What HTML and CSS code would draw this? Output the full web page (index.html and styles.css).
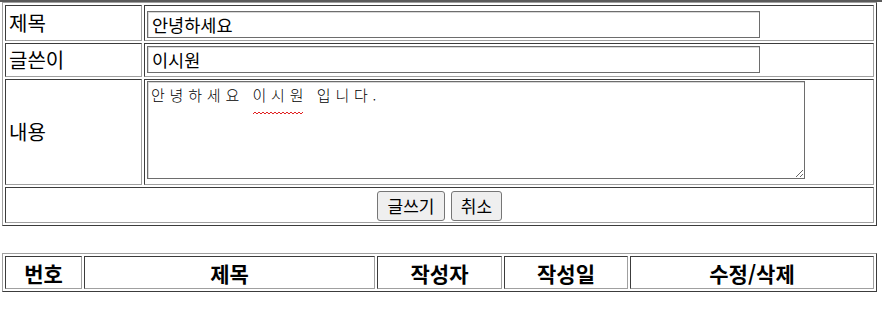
FILE: index.html
```html
<!DOCTYPE html>
<html lang="ko">
<head>
<meta charset="utf-8">
<title>글쓰기</title>
<link rel="stylesheet" href="styles.css">
</head>
<body>
<div class="topbar"></div>
<form class="write-form">
  <table class="grid write-table">
    <tr class="row-title">
      <td class="label">제목</td>
      <td class="field"><input class="text-input" type="text" value="안녕하세요"></td>
    </tr>
    <tr class="row-writer">
      <td class="label">글쓴이</td>
      <td class="field"><input class="text-input" type="text" value="이시원"></td>
    </tr>
    <tr class="row-content">
      <td class="label">내용</td>
      <td class="field field-area">
        <span class="area-wrap">
          <textarea class="text-area" spellcheck="false">안녕하세요 이시원 입니다.</textarea>
          <svg class="squiggle" width="50" height="4" viewBox="0 0 50 4"><path d="M0 3 L2 1 L4 3 L6 1 L8 3 L10 1 L12 3 L14 1 L16 3 L18 1 L20 3 L22 1 L24 3 L26 1 L28 3 L30 1 L32 3 L34 1 L36 3 L38 1 L40 3 L42 1 L44 3 L46 1 L48 3 L50 1" fill="none" stroke="#e02020" stroke-width="1"/></svg>
        </span>
      </td>
    </tr>
    <tr class="row-actions">
      <td class="actions" colspan="2">
        <button class="btn btn-write" type="button">글쓰기</button>
        <button class="btn btn-cancel" type="button">취소</button>
      </td>
    </tr>
  </table>
</form>

<table class="grid list-table">
  <tr>
    <th class="col-no">번호</th>
    <th class="col-title">제목</th>
    <th class="col-writer">작성자</th>
    <th class="col-date">작성일</th>
    <th class="col-edit">수정/삭제</th>
  </tr>
</table>
</body>
</html>
```

FILE: styles.css
```css
html, body {
  margin: 0;
  padding: 0;
  background: #ffffff;
}

body {
  font-family: "Noto Sans CJK KR", "Noto Sans", sans-serif;
  color: #000000;
}

.topbar {
  height: 2px;
  background: #5a5a5a;
}

.write-form {
  margin: 0;
}

.grid {
  border-collapse: separate;
  border-spacing: 2px;
  border-style: solid;
  border-width: 1px;
  border-color: #a0a0a0 #3c3c3c #3c3c3c #a0a0a0;
  margin-left: 2px;
  width: 875px;
  table-layout: fixed;
}

.grid td,
.grid th {
  border-style: solid;
  border-width: 1px;
  border-color: #3c3c3c #a0a0a0 #a0a0a0 #3c3c3c;
  padding: 0;
}

.write-table td.label {
  width: 132px;
  font-size: 20px;
  line-height: 24px;
  padding-left: 3px;
  vertical-align: middle;
}

.write-table td.field {
  padding-left: 2px;
}

.write-table .row-title td.field {
  padding-top: 5px;
  padding-bottom: 2px;
}

.write-table .row-writer td.field {
  padding-top: 2px;
  padding-bottom: 3px;
}

.text-input {
  display: block;
  box-sizing: border-box;
  width: 613px;
  height: 27px;
  margin: 0;
  padding: 0 4px;
  font-family: "Noto Sans CJK KR", sans-serif;
  font-size: 17.5px;
  color: #000;
  border-style: solid;
  border-width: 1px;
  border-color: #6d6d6d;
  box-shadow: inset 1px 1px 0 #d8d8d8;
  background: #fff;
  outline: none;
}

.write-table td.field-area {
  padding-top: 1px;
  padding-bottom: 5px;
  vertical-align: top;
}

.area-wrap {
  position: relative;
  display: block;
  width: 658px;
  height: 98px;
}

.text-area {
  display: block;
  box-sizing: border-box;
  width: 658px;
  height: 98px;
  margin: 0;
  padding: 3px 3px;
  resize: both;
  font-family: "Noto Sans CJK KR", monospace;
  font-size: 15px;
  font-weight: 300;
  letter-spacing: 4.8px;
  word-spacing: -0.5px;
  line-height: 20px;
  color: #000;
  border: 1px solid #6d6d6d;
  box-shadow: inset 1px 1px 0 #d8d8d8;
  background: #fff;
  outline: none;
}

.squiggle {
  position: absolute;
  left: 106px;
  top: 30px;
  display: block;
}

.write-table td.actions {
  text-align: center;
  padding-top: 3px;
  padding-bottom: 1px;
  font-size: 0;
}

.btn {
  box-sizing: border-box;
  height: 30px;
  margin: 0 3px;
  padding: 0;
  font-family: "Noto Sans CJK KR", sans-serif;
  font-size: 17px;
  line-height: 26px;
  color: #000;
  background: #efefef;
  border: 1px solid #767676;
  border-radius: 3px;
  vertical-align: top;
}

.btn-write {
  width: 68px;
}

.btn-cancel {
  width: 51px;
}

.list-table {
  margin-top: 27px;
}

.list-table th {
  height: 31px;
  font-size: 21px;
  font-weight: bold;
  line-height: 24px;
  text-align: center;
  vertical-align: middle;
}

.col-no { width: 75px; }
.col-title { width: 289px; }
.col-writer { width: 123px; }
.col-date { width: 122px; }
.col-edit { width: auto; }
```
